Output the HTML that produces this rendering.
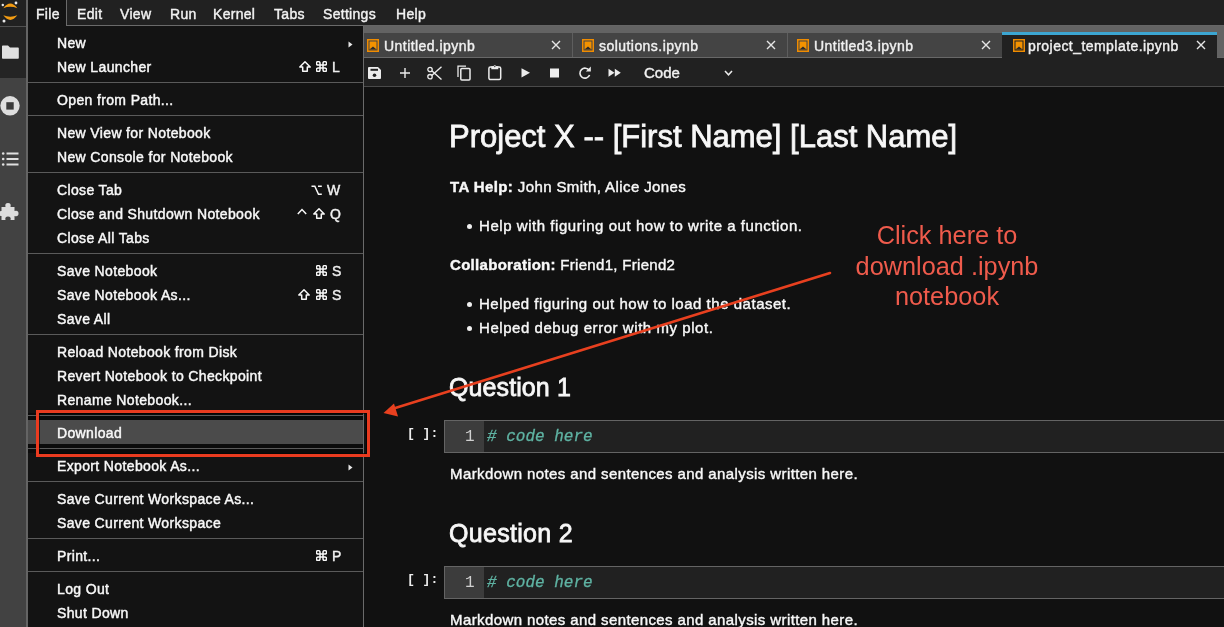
<!DOCTYPE html>
<html><head><meta charset="utf-8">
<style>
*{box-sizing:border-box;margin:0;padding:0}
body *{will-change:transform}
html,body{width:1224px;height:627px;overflow:hidden;background:#111111;font-family:"Liberation Sans",sans-serif;color:#fff;position:relative}
.abs{position:absolute}
#menubar{left:0;top:0;width:1224px;height:25px;background:#212121}
.mb{position:absolute;-webkit-text-stroke:0.4px #f2f2f2;top:6px;font-size:14px;line-height:16px;color:#f2f2f2;white-space:nowrap;letter-spacing:0.3px}
#sidebar{left:0;top:0;width:28px;height:627px;background:#424242;border-right:2px solid #646464}
#sb-top{left:0;top:0;width:26px;height:27px;background:#212121;border-bottom:1px solid #505050}
#sb-folder{left:0;top:27px;width:26px;height:51px;background:#242424}
#tabbar{left:363px;top:25px;width:861px;height:33px;background:#636363;border-top:1px solid #666}
.tabtxt{position:absolute;-webkit-text-stroke:0.4px #f0f0f0;font-size:14px;line-height:16px;color:#f0f0f0;white-space:nowrap;letter-spacing:0.45px}
#tabline{left:363px;top:57px;width:861px;height:1px;background:#686868}
#toolbar{left:363px;top:58px;width:861px;height:29px;background:#212121;border-bottom:1px solid #4a4a4a}
#menu{left:28px;top:26px;width:336px;height:610px;background:#131313;border-right:1px solid #6a6a6a}
.mi{position:absolute;left:56.5px;-webkit-text-stroke:0.45px #f8f8f8;font-size:14px;line-height:16px;color:#f8f8f8;white-space:nowrap;letter-spacing:0.36px}
.sc{position:absolute;-webkit-text-stroke:0.4px #f0f0f0;font-size:14px;line-height:16px;color:#f0f0f0;white-space:nowrap}
.sep{left:28px;width:335px;height:1px;background:#5a5a5a}
.nb{position:absolute;white-space:nowrap;color:#f8f8f8;-webkit-text-stroke:0.4px #f8f8f8}
.hd{-webkit-text-stroke:0.8px #f5f5f5}
.body{letter-spacing:0.4px}
.mono{font-family:"Liberation Mono",monospace;white-space:nowrap}
</style></head><body>
<div id="menubar" class="abs"></div>
<div id="sidebar" class="abs"></div>
<div id="sb-top" class="abs"></div>
<div id="sb-folder" class="abs"></div>
<svg class="abs" style="left:0px;top:0px" width="26" height="26" viewBox="0 0 26 26"><path d="M3.3 8.2 Q10.3 -1 17.3 8.2 Q10.3 5.3 3.3 8.2 Z" fill="#f39c12"/><path d="M3.3 15.3 Q10.3 24.5 17.3 15.3 Q10.3 18.2 3.3 15.3 Z" fill="#f39c12"/><circle cx="16" cy="3" r="1.4" fill="#e8e8e8"/><circle cx="2.8" cy="5" r="1.2" fill="#e8e8e8"/><circle cx="4" cy="21" r="1.5" fill="#e8e8e8"/></svg><svg class="abs" style="left:0px;top:44px" width="20" height="16" viewBox="0 0 20 16"><path d="M2 2.2 Q2 1.5 2.8 1.5 H8 L10 3.5 H18 Q18.8 3.5 18.8 4.3 V14 Q18.8 14.8 18 14.8 H2.8 Q2 14.8 2 14 Z" fill="#e0e0e0"/></svg><svg class="abs" style="left:0px;top:95px" width="22" height="22" viewBox="0 0 22 22"><circle cx="10" cy="10.8" r="9.7" fill="#dedede"/><rect x="6.3" y="7.2" width="7.4" height="7.4" fill="#3a3a3a"/></svg><svg class="abs" style="left:0px;top:150px" width="22" height="18" viewBox="0 0 22 18"><circle cx="3.2" cy="3.5" r="1.3" fill="#e0e0e0"/><circle cx="3.2" cy="9" r="1.3" fill="#e0e0e0"/><circle cx="3.2" cy="14.5" r="1.3" fill="#e0e0e0"/><path d="M6.5 3.5 H18.5 M6.5 9 H18.5 M6.5 14.5 H18.5" stroke="#e0e0e0" stroke-width="2"/></svg><svg class="abs" style="left:0px;top:200px" width="22" height="22" viewBox="0 0 22 22"><path d="M1.5 7 H5.5 Q4.5 3 8 3 Q11.5 3 10.5 7 H14.5 V11 Q18.5 10 18.5 13.5 Q18.5 17 14.5 16 V20 H10.5 Q11.5 16.5 8 16.5 Q4.5 16.5 5.5 20 H1.5 V16 Q-1 16.5 -1 13.5 Q-1 10.5 1.5 11 Z" fill="#dcdcdc"/></svg>
<div class="abs" style="left:28px;top:0;width:39px;height:26px;background:#131313;border-right:1px solid #6a6a6a"></div><div class="abs" style="left:67px;top:25px;width:297px;height:1px;background:#6a6a6a"></div>
<div class="mb" style="left:36px">File</div>
<div class="mb" style="left:77px">Edit</div>
<div class="mb" style="left:120px">View</div>
<div class="mb" style="left:170px">Run</div>
<div class="mb" style="left:213px">Kernel</div>
<div class="mb" style="left:274px">Tabs</div>
<div class="mb" style="left:323px">Settings</div>
<div class="mb" style="left:396px">Help</div>
<div id="tabbar" class="abs"></div>
<div id="tabline" class="abs"></div>
<div class="abs" style="left:363px;top:33px;width:209px;height:24px;background:#444444;border-left:1px solid #5e5e5e"></div><svg class="abs" style="left:367px;top:39px" width="12" height="13" viewBox="0 0 12 13"><rect x="0.75" y="0.75" width="10.5" height="11.5" fill="none" stroke="#f08c00" stroke-width="1.5"/><rect x="2.5" y="2.5" width="7" height="8" fill="#f39200"/><path d="M2.5 10.5 L6 7.5 L9.5 10.5 Z" fill="#2a2a2a"/></svg><div class="tabtxt" style="left:384px;top:38px">Untitled.ipynb</div><svg class="abs" style="left:551px;top:40px" width="10" height="10" viewBox="0 0 10 10"><path d="M1 1 L9 9 M9 1 L1 9" stroke="#e6e6e6" stroke-width="1.4"/></svg><div class="abs" style="left:572px;top:33px;width:215px;height:24px;background:#444444;border-left:1px solid #5e5e5e"></div><svg class="abs" style="left:582px;top:39px" width="12" height="13" viewBox="0 0 12 13"><rect x="0.75" y="0.75" width="10.5" height="11.5" fill="none" stroke="#f08c00" stroke-width="1.5"/><rect x="2.5" y="2.5" width="7" height="8" fill="#f39200"/><path d="M2.5 10.5 L6 7.5 L9.5 10.5 Z" fill="#2a2a2a"/></svg><div class="tabtxt" style="left:599px;top:38px">solutions.ipynb</div><svg class="abs" style="left:766px;top:40px" width="10" height="10" viewBox="0 0 10 10"><path d="M1 1 L9 9 M9 1 L1 9" stroke="#e6e6e6" stroke-width="1.4"/></svg><div class="abs" style="left:787px;top:33px;width:215px;height:24px;background:#444444;border-left:1px solid #5e5e5e"></div><svg class="abs" style="left:797px;top:39px" width="12" height="13" viewBox="0 0 12 13"><rect x="0.75" y="0.75" width="10.5" height="11.5" fill="none" stroke="#f08c00" stroke-width="1.5"/><rect x="2.5" y="2.5" width="7" height="8" fill="#f39200"/><path d="M2.5 10.5 L6 7.5 L9.5 10.5 Z" fill="#2a2a2a"/></svg><div class="tabtxt" style="left:814px;top:38px">Untitled3.ipynb</div><svg class="abs" style="left:981px;top:40px" width="10" height="10" viewBox="0 0 10 10"><path d="M1 1 L9 9 M9 1 L1 9" stroke="#e6e6e6" stroke-width="1.4"/></svg><div class="abs" style="left:1002px;top:32px;width:215px;height:26px;background:#212121;border-top:3px solid #3ca6d2"></div><svg class="abs" style="left:1013px;top:39px" width="12" height="13" viewBox="0 0 12 13"><rect x="0.75" y="0.75" width="10.5" height="11.5" fill="none" stroke="#f08c00" stroke-width="1.5"/><rect x="2.5" y="2.5" width="7" height="8" fill="#f39200"/><path d="M2.5 10.5 L6 7.5 L9.5 10.5 Z" fill="#2a2a2a"/></svg><div class="tabtxt" style="left:1028px;top:38px">project_template.ipynb</div><svg class="abs" style="left:1196px;top:40px" width="10" height="10" viewBox="0 0 10 10"><path d="M1 1 L9 9 M9 1 L1 9" stroke="#e6e6e6" stroke-width="1.4"/></svg>
<div id="toolbar" class="abs"></div>
<svg class="abs" style="left:368px;top:67px" width="13" height="12" viewBox="0 0 13 12"><path d="M0 1 Q0 0 1 0 H10 L13 3 V11 Q13 12 12 12 H1 Q0 12 0 11 Z" fill="#ececec"/><rect x="2.5" y="1.8" width="7.5" height="2" fill="#212121"/><circle cx="6.5" cy="8.3" r="1.8" fill="#212121"/></svg><svg class="abs" style="left:400px;top:68px" width="10" height="10" viewBox="0 0 10 10"><path d="M5 0 V10 M0 5 H10" stroke="#ececec" stroke-width="1.4"/></svg><svg class="abs" style="left:427px;top:66px" width="15" height="14" viewBox="0 0 15 14"><circle cx="3" cy="3.5" r="2.2" fill="none" stroke="#ececec" stroke-width="1.3"/><circle cx="3" cy="10.7" r="2.2" fill="none" stroke="#ececec" stroke-width="1.3"/><path d="M4.8 4.8 L14.5 13.5 M4.8 9.4 L14.5 0.8" stroke="#ececec" stroke-width="1.4"/></svg><svg class="abs" style="left:457px;top:65px" width="15" height="16" viewBox="0 0 15 16"><path d="M1 12 V1.2 H9" fill="none" stroke="#ececec" stroke-width="1.3"/><rect x="3.8" y="3.6" width="9.2" height="11.4" rx="1" fill="none" stroke="#ececec" stroke-width="1.5"/></svg><svg class="abs" style="left:488px;top:64px" width="14" height="17" viewBox="0 0 14 17"><rect x="0.9" y="2.9" width="11.8" height="12.7" rx="1.5" fill="none" stroke="#ececec" stroke-width="1.5"/><path d="M3.3 2.2 H5.3 Q6.8 0.2 8.3 2.2 H10.3 V5.2 H3.3 Z" fill="#ececec"/><circle cx="6.8" cy="2.6" r="0.7" fill="#212121"/></svg><svg class="abs" style="left:521px;top:68px" width="10" height="10" viewBox="0 0 10 10"><path d="M0.5 0.3 L9 4.8 L0.5 9.5 Z" fill="#ececec"/></svg><svg class="abs" style="left:550px;top:68px" width="10" height="10" viewBox="0 0 10 10"><rect x="0" y="0.5" width="9" height="9" fill="#ececec"/></svg><svg class="abs" style="left:578px;top:66px" width="14" height="14" viewBox="0 0 14 14"><path d="M11.2 4.5 A5 5 0 1 0 11.6 9" fill="none" stroke="#ececec" stroke-width="1.6"/><path d="M7.8 5.4 L12.8 5.4 L12.8 0.6 Z" fill="#ececec"/></svg><svg class="abs" style="left:608px;top:68px" width="14" height="10" viewBox="0 0 14 10"><path d="M0.5 0.8 L6.5 4.8 L0.5 8.8 Z M6.8 0.8 L12.8 4.8 L6.8 8.8 Z" fill="#ececec"/></svg><div class="abs" style="left:644px;top:65px;font-size:15px;line-height:16px;color:#f2f2f2;letter-spacing:0px;-webkit-text-stroke:0.4px #f2f2f2">Code</div><svg class="abs" style="left:724px;top:70px" width="10" height="7" viewBox="0 0 10 7"><path d="M1 1 L4.5 4.8 L8 1" fill="none" stroke="#ececec" stroke-width="1.5"/></svg>
<div class="nb hd" style="left:449px;top:137.26px;font-size:31px;line-height:0;letter-spacing:0px">Project X -- [First Name] [Last Name]</div><div class="nb body" style="left:450px;top:186.8px;font-size:15px;line-height:0;"><b>TA Help:</b> John Smith, Alice Jones</div><div class="abs" style="left:467px;top:223.5px;width:5px;height:5px;border-radius:50%;background:#f0f0f0"></div><div class="nb body" style="left:479px;top:225.8px;font-size:15px;line-height:0;letter-spacing:0.55px">Help with figuring out how to write a function.</div><div class="nb body" style="left:450px;top:264.8px;font-size:15px;line-height:0;letter-spacing:0.3px"><b>Collaboration:</b> Friend1, Friend2</div><div class="abs" style="left:467px;top:301.5px;width:5px;height:5px;border-radius:50%;background:#f0f0f0"></div><div class="nb body" style="left:479px;top:303.8px;font-size:15px;line-height:0;letter-spacing:0.52px">Helped figuring out how to load the dataset.</div><div class="abs" style="left:467px;top:325.5px;width:5px;height:5px;border-radius:50%;background:#f0f0f0"></div><div class="nb body" style="left:479px;top:327.8px;font-size:15px;line-height:0;letter-spacing:0.55px">Helped debug error with my plot.</div><div class="nb hd" style="left:449px;top:387.34px;font-size:25px;line-height:0;letter-spacing:0.1px">Question 1</div><div class="nb body" style="left:450px;top:473.8px;font-size:15px;line-height:0;">Markdown notes and sentences and analysis written here.</div><div class="nb hd" style="left:449px;top:533.34px;font-size:25px;line-height:0;letter-spacing:0.3px">Question 2</div><div class="nb body" style="left:450px;top:619.8px;font-size:15px;line-height:0;">Markdown notes and sentences and analysis written here.</div><div class="abs" style="left:444px;top:420px;width:790px;height:33px;background:#212121;border:1px solid #646464"></div><div class="abs" style="left:445px;top:421px;width:39px;height:31px;background:#3c3c3c"></div><div class="abs mono" style="left:465px;top:436.74px;font-size:16px;line-height:0;color:#d0d0d0">1</div><div class="abs mono" style="left:487px;top:436.74px;font-size:16px;line-height:0;color:#5fb3a3;font-style:italic;-webkit-text-stroke:0.3px #5fb3a3">#&nbsp;code&nbsp;here</div><div class="abs mono" style="left:407px;top:433.54px;font-size:13px;line-height:0;color:#ededed;font-weight:bold">[ ]:</div><div class="abs" style="left:444px;top:566px;width:790px;height:33px;background:#212121;border:1px solid #646464"></div><div class="abs" style="left:445px;top:567px;width:39px;height:31px;background:#3c3c3c"></div><div class="abs mono" style="left:465px;top:582.74px;font-size:16px;line-height:0;color:#d0d0d0">1</div><div class="abs mono" style="left:487px;top:582.74px;font-size:16px;line-height:0;color:#5fb3a3;font-style:italic;-webkit-text-stroke:0.3px #5fb3a3">#&nbsp;code&nbsp;here</div><div class="abs mono" style="left:407px;top:579.54px;font-size:13px;line-height:0;color:#ededed;font-weight:bold">[ ]:</div>
<div id="menu" class="abs"></div><div class="abs" style="left:28px;top:413px;width:335px;height:40px;background:#0b0b0b"></div><div class="abs" style="left:28px;top:420px;width:335px;height:24px;background:#4b4b4b"></div><div class="abs sep" style="top:82px"></div><div class="abs sep" style="top:115px"></div><div class="abs sep" style="top:172px"></div><div class="abs sep" style="top:253px"></div><div class="abs sep" style="top:334px"></div><div class="abs sep" style="top:415px"></div><div class="abs sep" style="top:448px"></div><div class="abs sep" style="top:481px"></div><div class="abs sep" style="top:538px"></div><div class="abs sep" style="top:571px"></div><div class="mi" style="top:35px">New</div><svg class="abs" style="left:348px;top:41px" width="5" height="7" viewBox="0 0 5 7"><path d="M0.5 0.5 L4.5 3.5 L0.5 6.5 Z" fill="#e8e8e8"/></svg><div class="mi" style="top:59px">New Launcher</div><svg class="abs" style="left:299px;top:61px" width="12" height="11" viewBox="0 0 12 11"><path d="M6 0.8 L11.2 6 H8.3 V10.3 H3.7 V6 H0.8 Z" fill="none" stroke="#f8f8f8" stroke-width="1.5" stroke-linejoin="round"/></svg><svg class="abs" style="left:316px;top:61px" width="11" height="11" viewBox="0 0 11 11"><path d="M2.2 4 H8.8 M2.2 7 H8.8 M4 2.2 V8.8 M7 2.2 V8.8 M2.2 4 A1.8 1.8 0 1 1 4 2.2 M7 2.2 A1.8 1.8 0 1 1 8.8 4 M8.8 7 A1.8 1.8 0 1 1 7 8.8 M4 8.8 A1.8 1.8 0 1 1 2.2 7" fill="none" stroke="#f8f8f8" stroke-width="1.5"/></svg><div class="sc" style="left:332px;top:59px">L</div><div class="mi" style="top:92px">Open from Path...</div><div class="mi" style="top:125px">New View for Notebook</div><div class="mi" style="top:149px">New Console for Notebook</div><div class="mi" style="top:182px">Close Tab</div><svg class="abs" style="left:311px;top:184.5px" width="11" height="10" viewBox="0 0 11 10"><path d="M0.5 1.2 H3.8 L7.5 9.3 H10.8 M7 1.2 H10.8" fill="none" stroke="#f8f8f8" stroke-width="1.5"/></svg><div class="sc" style="left:327px;top:182px">W</div><div class="mi" style="top:206px">Close and Shutdown Notebook</div><svg class="abs" style="left:297px;top:208px" width="10" height="7" viewBox="0 0 10 7"><path d="M0.8 6 L5 1.5 L9.2 6" fill="none" stroke="#f8f8f8" stroke-width="1.5"/></svg><svg class="abs" style="left:313px;top:208px" width="12" height="11" viewBox="0 0 12 11"><path d="M6 0.8 L11.2 6 H8.3 V10.3 H3.7 V6 H0.8 Z" fill="none" stroke="#f8f8f8" stroke-width="1.5" stroke-linejoin="round"/></svg><div class="sc" style="left:330px;top:206px">Q</div><div class="mi" style="top:230px">Close All Tabs</div><div class="mi" style="top:263px">Save Notebook</div><svg class="abs" style="left:316px;top:265px" width="11" height="11" viewBox="0 0 11 11"><path d="M2.2 4 H8.8 M2.2 7 H8.8 M4 2.2 V8.8 M7 2.2 V8.8 M2.2 4 A1.8 1.8 0 1 1 4 2.2 M7 2.2 A1.8 1.8 0 1 1 8.8 4 M8.8 7 A1.8 1.8 0 1 1 7 8.8 M4 8.8 A1.8 1.8 0 1 1 2.2 7" fill="none" stroke="#f8f8f8" stroke-width="1.5"/></svg><div class="sc" style="left:332px;top:263px">S</div><div class="mi" style="top:287px">Save Notebook As...</div><svg class="abs" style="left:298px;top:289px" width="12" height="11" viewBox="0 0 12 11"><path d="M6 0.8 L11.2 6 H8.3 V10.3 H3.7 V6 H0.8 Z" fill="none" stroke="#f8f8f8" stroke-width="1.5" stroke-linejoin="round"/></svg><svg class="abs" style="left:316px;top:289px" width="11" height="11" viewBox="0 0 11 11"><path d="M2.2 4 H8.8 M2.2 7 H8.8 M4 2.2 V8.8 M7 2.2 V8.8 M2.2 4 A1.8 1.8 0 1 1 4 2.2 M7 2.2 A1.8 1.8 0 1 1 8.8 4 M8.8 7 A1.8 1.8 0 1 1 7 8.8 M4 8.8 A1.8 1.8 0 1 1 2.2 7" fill="none" stroke="#f8f8f8" stroke-width="1.5"/></svg><div class="sc" style="left:332px;top:287px">S</div><div class="mi" style="top:311px">Save All</div><div class="mi" style="top:344px">Reload Notebook from Disk</div><div class="mi" style="top:368px">Revert Notebook to Checkpoint</div><div class="mi" style="top:392px">Rename Notebook...</div><div class="mi" style="top:425px">Download</div><div class="mi" style="top:458px">Export Notebook As...</div><svg class="abs" style="left:348px;top:464px" width="5" height="7" viewBox="0 0 5 7"><path d="M0.5 0.5 L4.5 3.5 L0.5 6.5 Z" fill="#e8e8e8"/></svg><div class="mi" style="top:491px">Save Current Workspace As...</div><div class="mi" style="top:515px">Save Current Workspace</div><div class="mi" style="top:548px">Print...</div><svg class="abs" style="left:316px;top:550px" width="11" height="11" viewBox="0 0 11 11"><path d="M2.2 4 H8.8 M2.2 7 H8.8 M4 2.2 V8.8 M7 2.2 V8.8 M2.2 4 A1.8 1.8 0 1 1 4 2.2 M7 2.2 A1.8 1.8 0 1 1 8.8 4 M8.8 7 A1.8 1.8 0 1 1 7 8.8 M4 8.8 A1.8 1.8 0 1 1 2.2 7" fill="none" stroke="#f8f8f8" stroke-width="1.5"/></svg><div class="sc" style="left:332px;top:548px">P</div><div class="mi" style="top:581px">Log Out</div><div class="mi" style="top:605px">Shut Down</div>
<div class="abs" style="left:36px;top:410px;width:334px;height:47px;border:3px solid #ea3b1f;box-shadow:inset 0 0 0 1px rgba(0,0,0,0.6)"></div><svg class="abs" style="left:0;top:0" width="1224" height="627"><path d="M830 273 L392 409" stroke="#e8401f" stroke-width="2.6" stroke-linecap="round"/><path d="M383.5 413 L394 403.5 L398 416.5 Z" fill="#e8401f"/></svg><div class="abs" style="left:847px;top:220px;width:200px;text-align:center;font-size:25.3px;line-height:30.5px;color:#ef5b4c">Click here to<br>download .ipynb<br>notebook</div>
</body></html>
